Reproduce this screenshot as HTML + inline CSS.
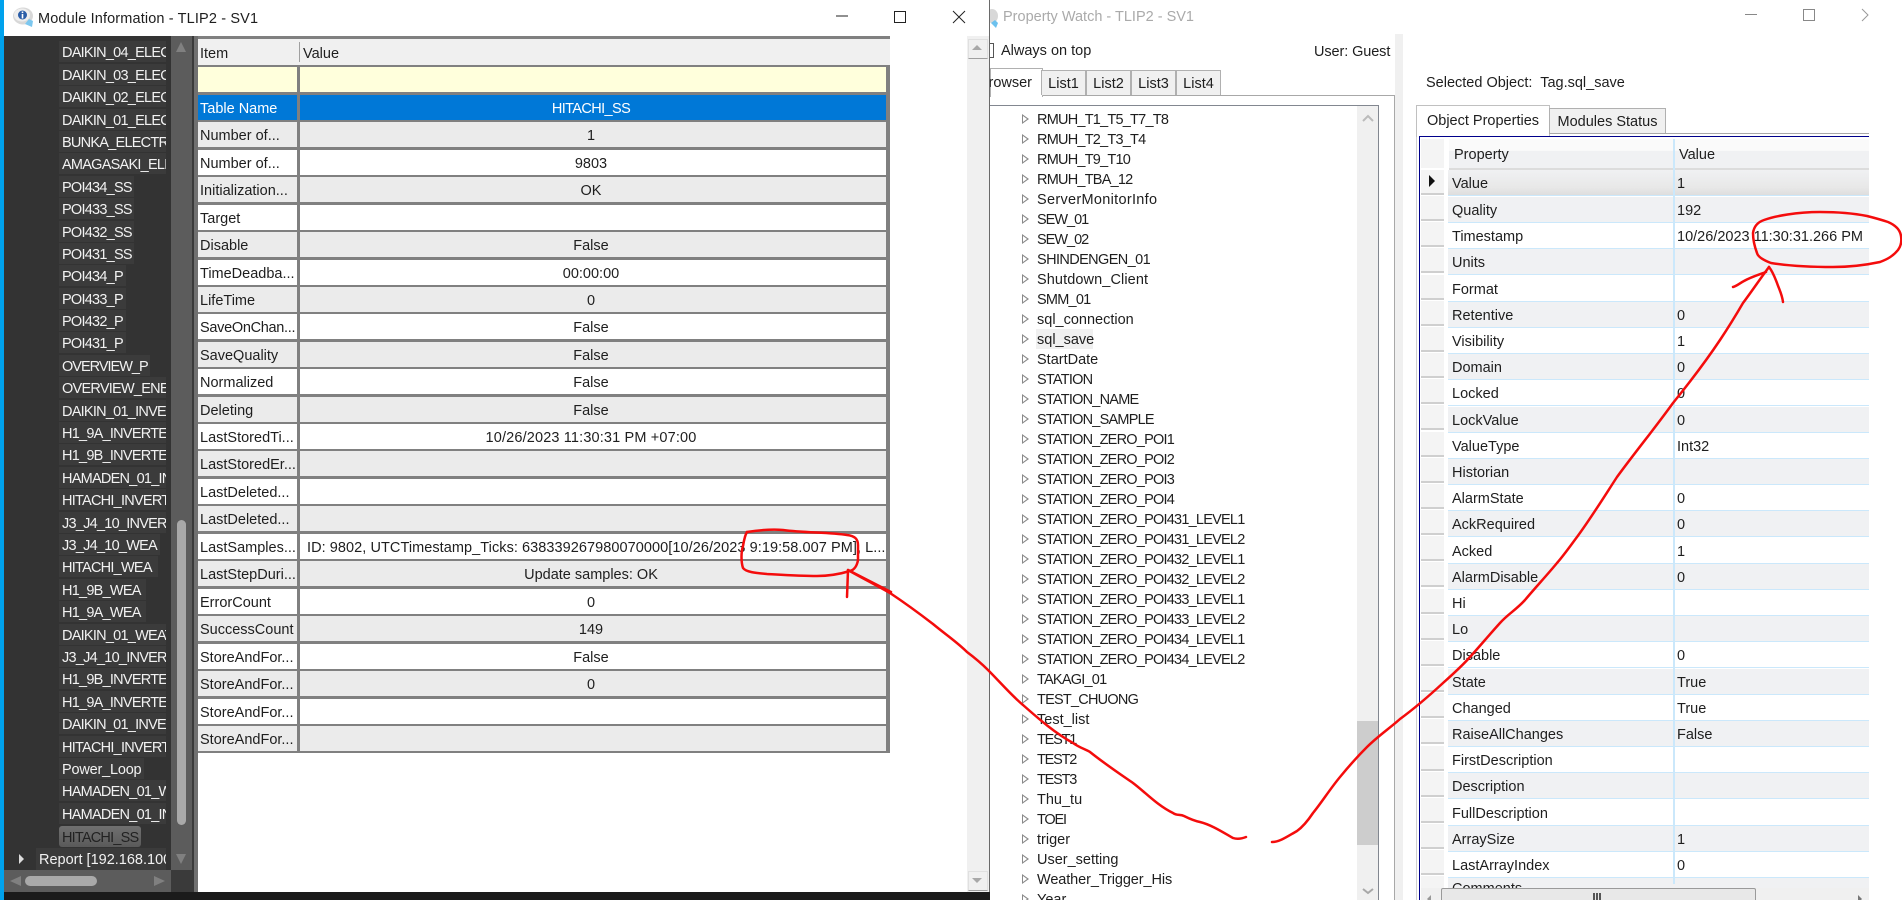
<!DOCTYPE html>
<html><head><meta charset="utf-8"><title>Module Information</title>
<style>
html,body{margin:0;padding:0;background:#fff}
#p{position:relative;width:1902px;height:900px;overflow:hidden;background:#fff;font:14.5px/20px "Liberation Sans",sans-serif;color:#1e1e1e}
#p div{position:absolute;white-space:nowrap}
.i{left:59px;height:21px;background:#3b3b3b;color:#f2f2f2;padding-left:3px;line-height:24px;overflow:hidden;width:104px;letter-spacing:-.75px}
.r{left:198px;width:692px;height:25px;line-height:29px}
.a{left:0;top:0;width:97px;height:25px;padding-left:2px;overflow:hidden}
.b{left:102px;top:0;width:586px;height:25px;padding-right:0}
.c{width:582px;height:25px;text-align:center;left:0;top:0}
.g .a,.g .b{background:#ebebeb}
.w .a,.w .b{background:#fff}
.n{left:1037px;height:20px;line-height:22px}
.u{letter-spacing:-.77px}
.n:before{content:"";position:absolute;left:-15px;top:5px;width:0;height:0;border-left:7px solid #8a8a8a;border-top:5px solid transparent;border-bottom:5px solid transparent}
.n:after{content:"";position:absolute;left:-14px;top:7px;width:0;height:0;border-left:4px solid #fff;border-top:3px solid transparent;border-bottom:3px solid transparent}
.q{left:1448px;width:421px;height:25px;line-height:28px;border-bottom:1px solid #cbe8fb}
.q.o{background:#f0f1f3}
.k{left:4px;top:0}
.v{left:229px;top:0}
.h{left:1421px;width:23px;height:23px;background:#f4f4f4;border-bottom:2px solid #cfcfcf}
.tab{top:70px;height:24px;background:#f0f0f0;border:1px solid #b0b0b0;border-bottom:none;text-align:center;line-height:27px}
</style></head><body><div id="p">

<!-- right window -->
<div style="left:1003px;top:7px;color:#aaa;font-size:14.5px;line-height:20px">Property Watch - TLIP2 - SV1</div>
<div style="left:1001px;top:41px;color:#1e1e1e">Always on top</div>
<div style="left:1314px;top:42px;letter-spacing:-.1px">User: Guest</div>
<div style="left:988px;top:43px;width:4px;height:13px;border:1px solid #555"></div>
<svg style="position:absolute;left:988px;top:8px" width="12" height="20"><ellipse cx="4" cy="8" rx="6" ry="7" fill="#d8d8d8"/><path d="M3 15l5 5 2-5-3-3z" fill="#6cc1ee"/></svg>
<div style="left:1395px;top:34px;width:8px;height:866px;background:#f0f0f0"></div>

<div style="left:990px;top:95px;width:404px;height:805px;border-top:1px solid #a8a8a8;border-right:1px solid #a8a8a8"></div>
<div style="left:990px;top:68px;width:51px;height:28px;background:#fff;border:1px solid #b0b0b0;border-bottom:none"></div>
<div style="left:990px;top:73px;height:20px;overflow:hidden;width:50px"><div style="right:8px;top:0">Browser</div></div>
<div class="tab" style="left:1041px;width:43px">List1</div>
<div class="tab" style="left:1086px;width:43px">List2</div>
<div class="tab" style="left:1131px;width:43px">List3</div>
<div class="tab" style="left:1176px;width:43px">List4</div>

<div style="left:990px;top:105px;width:388px;height:795px;border-top:1px solid #828790;border-right:1px solid #828790"></div>
<div style="left:1357px;top:106px;width:21px;height:794px;background:#f0f0f0"></div>
<div style="left:1357px;top:721px;width:21px;height:124px;background:#cdcdcd"></div>
<svg style="position:absolute;left:1357px;top:106px" width="21" height="794"><path d="M6 15l5-5 5 5" fill="none" stroke="#bbb" stroke-width="2"/><path d="M6 783l5 4 5-4" fill="none" stroke="#a8a8a8" stroke-width="2"/></svg>

<div style="left:1036px;top:329px;width:57px;height:20px;background:#f0f0f0"></div>
<div class="n u" style="top:109px">RMUH_T1_T5_T7_T8</div>
<div class="n u" style="top:129px">RMUH_T2_T3_T4</div>
<div class="n u" style="top:149px">RMUH_T9_T10</div>
<div class="n u" style="top:169px">RMUH_TBA_12</div>
<div class="n" style="top:189px;letter-spacing:.3px">ServerMonitorInfo</div>
<div class="n" style="top:209px;letter-spacing:-1px">SEW_01</div>
<div class="n" style="top:229px;letter-spacing:-1px">SEW_02</div>
<div class="n" style="top:249px;letter-spacing:-.6px">SHINDENGEN_01</div>
<div class="n" style="top:269px;letter-spacing:.1px">Shutdown_Client</div>
<div class="n u" style="top:289px">SMM_01</div>
<div class="n" style="top:309px">sql_connection</div>
<div class="n" style="top:329px">sql_save</div>
<div class="n" style="top:349px">StartDate</div>
<div class="n u" style="top:369px">STATION</div>
<div class="n u" style="top:389px">STATION_NAME</div>
<div class="n u" style="top:409px">STATION_SAMPLE</div>
<div class="n u" style="top:429px">STATION_ZERO_POI1</div>
<div class="n u" style="top:449px">STATION_ZERO_POI2</div>
<div class="n u" style="top:469px">STATION_ZERO_POI3</div>
<div class="n u" style="top:489px">STATION_ZERO_POI4</div>
<div class="n u" style="top:509px">STATION_ZERO_POI431_LEVEL1</div>
<div class="n u" style="top:529px">STATION_ZERO_POI431_LEVEL2</div>
<div class="n u" style="top:549px">STATION_ZERO_POI432_LEVEL1</div>
<div class="n u" style="top:569px">STATION_ZERO_POI432_LEVEL2</div>
<div class="n u" style="top:589px">STATION_ZERO_POI433_LEVEL1</div>
<div class="n u" style="top:609px">STATION_ZERO_POI433_LEVEL2</div>
<div class="n u" style="top:629px">STATION_ZERO_POI434_LEVEL1</div>
<div class="n u" style="top:649px">STATION_ZERO_POI434_LEVEL2</div>
<div class="n u" style="top:669px">TAKAGI_01</div>
<div class="n u" style="top:689px">TEST_CHUONG</div>
<div class="n" style="top:709px">Test_list</div>
<div class="n" style="top:729px;letter-spacing:-1.2px">TEST1</div>
<div class="n" style="top:749px;letter-spacing:-1.2px">TEST2</div>
<div class="n" style="top:769px;letter-spacing:-1.2px">TEST3</div>
<div class="n" style="top:789px">Thu_tu</div>
<div class="n" style="top:809px;letter-spacing:-1.2px">TOEI</div>
<div class="n" style="top:829px">triger</div>
<div class="n" style="top:849px">User_setting</div>
<div class="n" style="top:869px;letter-spacing:-.1px">Weather_Trigger_His</div>
<div class="n" style="top:889px">Year</div>

<!-- right pane -->
<div style="left:1426px;top:73px">Selected Object:&nbsp; Tag.sql_save</div>
<div style="left:1416px;top:133px;width:453px;height:767px;border-left:1px solid #d0d0d0"></div>
<div style="left:1416px;top:105px;width:132px;height:31px;background:#fff;border:1px solid #c0c0c0;border-bottom:none;text-align:center;line-height:30px">Object Properties</div>
<div style="left:1549px;top:108px;width:115px;height:25px;background:#f0f0f0;border:1px solid #b0b0b0;border-bottom:none;text-align:center;line-height:27px">Modules Status</div>
<div style="left:1549px;top:133px;width:320px;height:1px;background:#a8a8a8"></div>
<div style="left:1419px;top:136px;width:450px;height:1px;background:#00008b"></div>
<div style="left:1419px;top:136px;width:1px;height:764px;background:#00008b"></div>
<div style="left:1421px;top:139px;width:23px;height:29px;background:#f4f4f4"></div>
<div style="left:1449px;top:139px;width:224px;height:29px;background:linear-gradient(#fafafa 40%,#f0f1f3 42%);border-bottom:2px solid #dcdcdc;line-height:32px;text-indent:5px">Property</div>
<div style="left:1675px;top:139px;width:194px;height:29px;background:linear-gradient(#fafafa 40%,#f0f1f3 42%);border-bottom:2px solid #dcdcdc;line-height:32px;text-indent:4px">Value</div>

<div class="h" style="top:170px"></div><div class="h" style="top:196px"></div><div class="h" style="top:222px"></div><div class="h" style="top:248px"></div><div class="h" style="top:275px"></div><div class="h" style="top:301px"></div><div class="h" style="top:327px"></div><div class="h" style="top:353px"></div><div class="h" style="top:379px"></div><div class="h" style="top:405px"></div><div class="h" style="top:432px"></div><div class="h" style="top:458px"></div><div class="h" style="top:484px"></div><div class="h" style="top:510px"></div><div class="h" style="top:536px"></div><div class="h" style="top:562px"></div><div class="h" style="top:589px"></div><div class="h" style="top:615px"></div><div class="h" style="top:641px"></div><div class="h" style="top:667px"></div><div class="h" style="top:693px"></div><div class="h" style="top:719px"></div><div class="h" style="top:746px"></div><div class="h" style="top:772px"></div><div class="h" style="top:798px"></div><div class="h" style="top:824px"></div><div class="h" style="top:850px"></div><div class="h" style="top:876px;height:12px;border:none"></div>
<div style="left:1429px;top:175px;width:0;height:0;border-left:6px solid #111;border-top:6px solid transparent;border-bottom:6px solid transparent"></div>

<div class="q" style="top:170px;background:linear-gradient(#f0f1f3,#e8e8e8 70%,#dedede)"><div class="k">Value</div><div class="v">1</div></div>
<div class="q o" style="top:197px"><div class="k">Quality</div><div class="v">192</div></div>
<div class="q" style="top:223px"><div class="k">Timestamp</div><div class="v">10/26/2023 11:30:31.266 PM</div></div>
<div class="q o" style="top:249px"><div class="k">Units</div></div>
<div class="q" style="top:276px"><div class="k">Format</div></div>
<div class="q o" style="top:302px"><div class="k">Retentive</div><div class="v">0</div></div>
<div class="q" style="top:328px"><div class="k">Visibility</div><div class="v">1</div></div>
<div class="q o" style="top:354px"><div class="k">Domain</div><div class="v">0</div></div>
<div class="q" style="top:380px"><div class="k">Locked</div><div class="v">0</div></div>
<div class="q o" style="top:407px"><div class="k">LockValue</div><div class="v">0</div></div>
<div class="q" style="top:433px"><div class="k">ValueType</div><div class="v">Int32</div></div>
<div class="q o" style="top:459px"><div class="k">Historian</div></div>
<div class="q" style="top:485px"><div class="k">AlarmState</div><div class="v">0</div></div>
<div class="q o" style="top:511px"><div class="k">AckRequired</div><div class="v">0</div></div>
<div class="q" style="top:538px"><div class="k">Acked</div><div class="v">1</div></div>
<div class="q o" style="top:564px"><div class="k">AlarmDisable</div><div class="v">0</div></div>
<div class="q" style="top:590px"><div class="k">Hi</div></div>
<div class="q o" style="top:616px"><div class="k">Lo</div></div>
<div class="q" style="top:642px"><div class="k">Disable</div><div class="v">0</div></div>
<div class="q o" style="top:669px"><div class="k">State</div><div class="v">True</div></div>
<div class="q" style="top:695px"><div class="k">Changed</div><div class="v">True</div></div>
<div class="q o" style="top:721px"><div class="k">RaiseAllChanges</div><div class="v">False</div></div>
<div class="q" style="top:747px"><div class="k">FirstDescription</div></div>
<div class="q o" style="top:773px"><div class="k">Description</div></div>
<div class="q" style="top:800px"><div class="k">FullDescription</div></div>
<div class="q o" style="top:826px"><div class="k">ArraySize</div><div class="v">1</div></div>
<div class="q" style="top:852px"><div class="k">LastArrayIndex</div><div class="v">0</div></div>
<div class="q o" style="top:878px;height:10px;overflow:hidden;border:none;line-height:22px"><div class="k">Comments</div></div>
<div style="left:1673px;top:139px;width:2px;height:745px;background:#cbe8fb"></div>
<div style="left:1421px;top:888px;width:448px;height:12px;background:#f0f0f0"></div>
<div style="left:1441px;top:888px;width:313px;height:12px;background:#e8e8e8;border:1px solid #9a9a9a;border-bottom:none;border-radius:2px 2px 0 0"></div>
<div style="left:1593px;top:893px;width:8px;height:7px;background:repeating-linear-gradient(90deg,#555 0 2px,#e8e8e8 2px 3px)"></div>
<div style="left:1427px;top:895px;width:0;height:0;border-right:4px solid #999;border-top:4px solid transparent;border-bottom:4px solid transparent"></div>
<div style="left:1858px;top:895px;width:0;height:0;border-left:4px solid #777;border-top:4px solid transparent;border-bottom:4px solid transparent"></div>

<svg style="position:absolute;left:990px;top:0" width="912" height="30"><path d="M755 14.500h12M813.500 9.500h11v11h-11z" fill="none" stroke="#888" stroke-width="1"/><path d="M872 9l6 6-6 6" fill="none" stroke="#999"/></svg>

<!-- left window -->
<div style="left:0;top:0;width:990px;height:900px;background:#fff"></div>
<div style="left:989px;top:0;width:1px;height:892px;background:#6a6a6a"></div>
<div style="left:0;top:0;width:4px;height:900px;background:#00a2ed"></div>
<div style="left:4px;top:892px;width:986px;height:8px;background:#1b1b1b"></div>

<svg style="position:absolute;left:12px;top:7px" width="24" height="22"><ellipse cx="11" cy="9" rx="10" ry="8.500" fill="#d8d8d8"/><ellipse cx="10" cy="8" rx="8" ry="6.500" fill="#eee"/><circle cx="10.500" cy="8" r="4.500" fill="#2a5da8"/><rect x="9.700" y="4.500" width="1.600" height="1.600" fill="#fff"/><rect x="9.700" y="7" width="1.600" height="4.500" fill="#fff"/><path d="M13 17l7 3 1-6-4-2z" fill="#7cc7ef"/></svg>
<div style="left:38px;top:9px;font-size:14.5px;letter-spacing:.14px">Module Information - TLIP2 - SV1</div>
<svg style="position:absolute;left:830px;top:5px" width="150" height="26"><path d="M6 11h12M64.500 6.500h11v11h-11zM123 6l12 12M135 6l-12 12" fill="none" stroke="#222" stroke-width="1"/></svg>

<div style="left:4px;top:36px;width:188px;height:834px;background:#333"></div>
<div style="left:171px;top:36px;width:21px;height:856px;background:#5c5c5c"></div>
<div style="left:4px;top:870px;width:167px;height:22px;background:#5c5c5c"></div>
<div style="left:171px;top:870px;width:21px;height:22px;background:#3a3a3a"></div>
<div style="left:177px;top:520px;width:9px;height:305px;background:#a9a9a9;border-radius:5px"></div>
<div style="left:25px;top:876px;width:72px;height:10px;background:#a9a9a9;border-radius:5px"></div>
<div style="left:192px;top:36px;width:2px;height:856px;background:#3a3a3a"></div>
<div style="left:194px;top:36px;width:4px;height:856px;background:#707070"></div>
<svg style="position:absolute;left:0;top:0" width="192" height="892"><path d="M176 52l5-10 5 10zM176 854l5 10 5-10zM10 881l11-5v10zM165 881l-11-5v10z" fill="#808080"/></svg>

<div class="i" style="top:41px">DAIKIN_04_ELECTRIC</div>
<div class="i" style="top:64px">DAIKIN_03_ELECTRIC</div>
<div class="i" style="top:86px">DAIKIN_02_ELECTRIC</div>
<div class="i" style="top:109px">DAIKIN_01_ELECTRIC</div>
<div class="i" style="top:131px">BUNKA_ELECTRIC</div>
<div class="i" style="top:153px">AMAGASAKI_ELECTRIC</div>
<div class="i" style="top:176px;width:72px">POI434_SS</div>
<div class="i" style="top:198px;width:72px">POI433_SS</div>
<div class="i" style="top:221px;width:72px">POI432_SS</div>
<div class="i" style="top:243px;width:72px">POI431_SS</div>
<div class="i" style="top:265px;width:64px">POI434_P</div>
<div class="i" style="top:288px;width:64px">POI433_P</div>
<div class="i" style="top:310px;width:64px">POI432_P</div>
<div class="i" style="top:332px;width:64px">POI431_P</div>
<div class="i" style="top:355px;width:88px;letter-spacing:-1px">OVERVIEW_P</div>
<div class="i" style="top:377px">OVERVIEW_ENERGY</div>
<div class="i" style="top:400px">DAIKIN_01_INVERTER</div>
<div class="i" style="top:422px">H1_9A_INVERTER</div>
<div class="i" style="top:444px">H1_9B_INVERTER</div>
<div class="i" style="top:467px">HAMADEN_01_INVERTER</div>
<div class="i" style="top:489px">HITACHI_INVERTER</div>
<div class="i" style="top:512px">J3_J4_10_INVERTER</div>
<div class="i" style="top:534px;width:98px">J3_J4_10_WEA</div>
<div class="i" style="top:556px;width:96px">HITACHI_WEA</div>
<div class="i" style="top:579px;width:84px">H1_9B_WEA</div>
<div class="i" style="top:601px;width:84px">H1_9A_WEA</div>
<div class="i" style="top:624px">DAIKIN_01_WEATHER</div>
<div class="i" style="top:646px">J3_J4_10_INVERTER</div>
<div class="i" style="top:668px">H1_9B_INVERTER</div>
<div class="i" style="top:691px">H1_9A_INVERTER</div>
<div class="i" style="top:713px">DAIKIN_01_INVERTER</div>
<div class="i" style="top:736px">HITACHI_INVERTER</div>
<div class="i" style="top:758px;width:82px;letter-spacing:-.2px">Power_Loop</div>
<div class="i" style="top:780px">HAMADEN_01_WEATHER</div>
<div class="i" style="top:803px">HAMADEN_01_INVERTER</div>
<div class="i" style="top:826px;width:79px;background:linear-gradient(#707070,#5a5a5a);color:#222;border-radius:3px;letter-spacing:-.8px">HITACHI_SS</div>
<div class="i" style="top:848px;left:36px;width:127px;height:22px;letter-spacing:0">Report [192.168.100.1]</div>
<div style="left:19px;top:854px;width:0;height:0;border-left:5px solid #ddd;border-top:5px solid transparent;border-bottom:5px solid transparent"></div>

<!-- table -->
<div style="left:198px;top:36px;width:692px;height:3px;background:#808080"></div>
<div style="left:198px;top:39px;width:692px;height:714px;background:#808080"></div>
<div style="left:198px;top:39px;width:692px;height:26px;background:#f0f0f0;line-height:30px"><div style="left:2px;top:0">Item</div><div style="left:101px;top:3px;width:1px;height:20px;background:#a0a0a0"></div><div style="left:105px;top:0">Value</div></div>
<div class="r" style="top:67px"><div class="a" style="background:#ffffdc"></div><div class="b" style="background:#ffffdc"></div></div>
<div class="r" style="top:95px;color:#fff"><div class="a" style="background:#0078d7">Table Name</div><div class="b" style="background:#0078d7"><div class="c" style="letter-spacing:-.6px">HITACHI_SS</div></div></div>
<div class="r g" style="top:122px"><div class="a">Number of...</div><div class="b"><div class="c">1</div></div></div>
<div class="r w" style="top:150px"><div class="a">Number of...</div><div class="b"><div class="c">9803</div></div></div>
<div class="r g" style="top:177px"><div class="a">Initialization...</div><div class="b"><div class="c">OK</div></div></div>
<div class="r w" style="top:205px"><div class="a">Target</div><div class="b"></div></div>
<div class="r g" style="top:232px"><div class="a">Disable</div><div class="b"><div class="c">False</div></div></div>
<div class="r w" style="top:260px"><div class="a">TimeDeadba...</div><div class="b"><div class="c">00:00:00</div></div></div>
<div class="r g" style="top:287px"><div class="a">LifeTime</div><div class="b"><div class="c">0</div></div></div>
<div class="r w" style="top:314px"><div class="a" style="letter-spacing:-.3px">SaveOnChan...</div><div class="b"><div class="c">False</div></div></div>
<div class="r g" style="top:342px"><div class="a">SaveQuality</div><div class="b"><div class="c">False</div></div></div>
<div class="r w" style="top:369px"><div class="a">Normalized</div><div class="b"><div class="c">False</div></div></div>
<div class="r g" style="top:397px"><div class="a">Deleting</div><div class="b"><div class="c">False</div></div></div>
<div class="r w" style="top:424px"><div class="a">LastStoredTi...</div><div class="b"><div class="c" style="letter-spacing:.15px">10/26/2023 11:30:31 PM +07:00</div></div></div>
<div class="r g" style="top:451px"><div class="a">LastStoredEr...</div><div class="b"></div></div>
<div class="r w" style="top:479px"><div class="a">LastDeleted...</div><div class="b"></div></div>
<div class="r g" style="top:506px"><div class="a">LastDeleted...</div><div class="b"></div></div>
<div class="r w" style="top:534px"><div class="a">LastSamples...</div><div class="b"><div style="left:7px;top:0;letter-spacing:.06px">ID: 9802, UTCTimestamp_Ticks: 638339267980070000[10/26/2023 9:19:58.007 PM], L...</div></div></div>
<div class="r g" style="top:561px"><div class="a">LastStepDuri...</div><div class="b"><div class="c">Update samples: OK</div></div></div>
<div class="r w" style="top:589px"><div class="a">ErrorCount</div><div class="b"><div class="c">0</div></div></div>
<div class="r g" style="top:616px"><div class="a">SuccessCount</div><div class="b"><div class="c">149</div></div></div>
<div class="r w" style="top:644px"><div class="a">StoreAndFor...</div><div class="b"><div class="c">False</div></div></div>
<div class="r g" style="top:671px"><div class="a">StoreAndFor...</div><div class="b"><div class="c">0</div></div></div>
<div class="r w" style="top:699px"><div class="a">StoreAndFor...</div><div class="b"></div></div>
<div class="r g" style="top:726px"><div class="a">StoreAndFor...</div><div class="b"></div></div>

<!-- left window scrollbar -->
<div style="left:967px;top:36px;width:22px;height:856px;background:#f0f0f0"></div>
<div style="left:968px;top:39px;width:18px;height:18px;background:#f0f0f0;border:1px solid #e0e0e0;border-bottom:1px solid #a0a0a0"></div>
<div style="left:972px;top:45px;width:0;height:0;border-bottom:5px solid #a8a8a8;border-left:5px solid transparent;border-right:5px solid transparent"></div>
<div style="left:968px;top:871px;width:18px;height:18px;background:#f0f0f0;border:1px solid #e0e0e0;border-bottom:1px solid #a0a0a0"></div>
<div style="left:972px;top:878px;width:0;height:0;border-top:5px solid #a8a8a8;border-left:5px solid transparent;border-right:5px solid transparent"></div>

<!-- annotations -->
<svg style="position:absolute;left:0;top:0" width="1902" height="900" fill="none" stroke="#f40c0c" stroke-width="2.5" stroke-linecap="round" stroke-linejoin="round">
<path d="M747 532C760 530 772 529 783 530C805 533 830 532 847 535C855 536 858 539 858 545L858 560C857 566 854 570 850 571C840 574 830 576 817 576C800 576 785 575 767 574C755 573 746 572 743 568C741 562 741 552 743 546C744 540 745 535 747 532"/>
<path d="M847 597L848 570L891 592"/>
<path d="M848 570C862 578 876 585 890 593C905 603 920 614 933 624C945 634 957 642 967 652C975 658 982 664 988 670C1000 682 1012 696 1023 705C1040 720 1055 733 1073 743C1080 748 1085 749 1090 752C1105 764 1120 774 1133 783C1145 792 1158 806 1173 813C1177 816 1180 814 1184 816C1190 819 1195 821 1200 822C1212 825 1224 833 1233 838C1236 839 1241 839 1246 837"/>
<path d="M1272 842C1280 842 1288 836 1297 831C1304 826 1309 819 1313 813C1322 802 1330 789 1340 777C1349 766 1358 756 1367 747C1378 736 1390 728 1400 719C1415 708 1430 695 1443 683C1452 675 1462 666 1470 657C1480 646 1490 634 1500 623C1508 614 1516 610 1525 600C1535 588 1548 574 1557 563C1564 555 1571 545 1577 537C1591 518 1604 497 1617 477C1636 451 1655 428 1673 403C1690 382 1706 361 1720 340C1728 328 1736 315 1743 303C1752 291 1760 279 1769 267"/>
<path d="M1733 287C1737 286 1740 283 1744 281C1751 277 1758 275 1766 272"/>
<path d="M1769 267C1773 272 1775 278 1777 283C1779 289 1782 294 1783 302"/>
<path d="M1764 220C1775 216 1797 212 1820 212C1837 212 1852 213 1867 216C1875 218 1882 220 1888 222C1895 225 1900 229 1901 236C1902 242 1901 246 1898 250C1893 256 1888 259 1880 262C1866 265 1850 267 1833 267C1810 267 1790 266 1771 263C1763 260 1758 257 1757 253C1754 245 1753 240 1753 233C1754 226 1758 222 1764 220"/>
</svg>

</div></body></html>
